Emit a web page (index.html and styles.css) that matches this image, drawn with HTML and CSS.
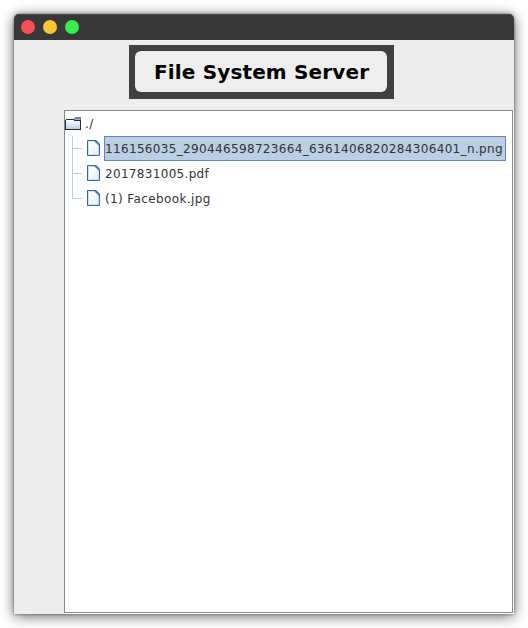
FILE: index.html
```
<!DOCTYPE html>
<html lang="en">
<head>
<meta charset="utf-8">
<title>File System Server</title>
<link rel="stylesheet" href="styles.css">
</head>
<body>
<svg class="defs" width="0" height="0" aria-hidden="true">
  <defs>
    <linearGradient id="paper" x1="0" y1="0" x2="1" y2="1"><stop offset=".3" stop-color="#fff"/><stop offset="1" stop-color="#dce8f3"/></linearGradient>
    <linearGradient id="folder" x1="0" y1="0" x2="0" y2="1"><stop offset="0" stop-color="#fff"/><stop offset="1" stop-color="#b8cfe5"/></linearGradient>
    <symbol id="file" viewBox="0 0 13 16">
      <path d="M.5 .5H8L12.500 5V15.500H.5Z" fill="url(#paper)" stroke="#2f68a3"/>
      <path d="M1.500 14.500V1.500H7M1.500 14.500H11.500V6" fill="none" stroke="#cfdfee"/>
      <path d="M7 0H9L13 4V6H12L7 1Z" fill="#2f68a3"/>
      <path d="M8 1.500L11.500 5" stroke="#dce8f3" stroke-dasharray="1 1"/>
    </symbol>
  </defs>
</svg>
<main class="window">
  <header class="titlebar"><i class="dot close"></i><i class="dot minimize"></i><i class="dot zoom"></i></header>
  <div class="content">
    <h1 class="banner"><span>File System Server</span></h1>
    <ul class="tree">
      <li class="root">
        <svg class="folder" width="16" height="13" viewBox="0 0 16 13" shape-rendering="crispEdges"><path d="M1 3H15V12H1Z" fill="url(#folder)"/><path d="M0 3H1V2H9V3H16V13H0Z M1 3V12H15V4H9V3Z" fill="#2b2b2b" fill-rule="evenodd"/><path d="M10 0H16V3H9V1H10Z" fill="#6382bf"/><path d="M10 2H15V3H10Z" fill="#9eb4dc"/></svg>
        <span class="name folder-name">./</span>
      </li>
      <li class="node"><svg class="file" width="13" height="16"><use href="#file"/></svg><span class="name selected">116156035_290446598723664_6361406820284306401_n.png</span></li>
      <li class="node"><svg class="file" width="13" height="16"><use href="#file"/></svg><span class="name">2017831005.pdf</span></li>
      <li class="node"><svg class="file" width="13" height="16"><use href="#file"/></svg><span class="name jpg">(1) Facebook.jpg</span></li>
    </ul>
  </div>
</main>
</body>
</html>
```

FILE: styles.css
```
* { box-sizing: border-box; }
body { margin: 0; padding: 14px; background: #fff; font-family: "DejaVu Sans", sans-serif; }
.defs { display: block; }
.window {
  width: 500px; height: 600px; overflow: hidden;
  display: flex; flex-direction: column;
  background: #ededed; border-radius: 5px 5px 0 0;
  box-shadow: 0 2px 14px rgba(0,0,0,.6), 0 0 3px rgba(0,0,0,.5);
}
.titlebar { height: 26px; flex: none; display: flex; align-items: center; gap: 8px; padding: 0 0 1px 7px; background: #383838; border-top: 1px solid #4b4b4b; }
.dot { width: 14px; height: 14px; border-radius: 50%; }
.close { background: #f64f57; }
.minimize { background: #fcc537; }
.zoom { background: #38ec4a; }
.content { flex: 1; display: flex; flex-direction: column; padding-top: 5px; }
.banner { width: 265px; height: 54px; margin: 0 0 11px 115px; padding: 6px 7px 7px 6px; background: #404040; flex: none; }
.banner span { display: block; height: 41px; padding-left: 19px; border-radius: 6px; background: #eee; color: #000; font-size: 20px; line-height: 43px; letter-spacing: .15px; white-space: nowrap; }
.tree { flex: 1; margin: 0 1px 1px 50px; padding: 0; list-style: none; background: #fff; border: 1px solid #7a8a99; box-shadow: 1px 1px #fff; }
.root, .node { height: 25px; display: flex; align-items: center; }
.node { padding-left: 7px; background: linear-gradient(#b8cfe5, #b8cfe5) 7px 0 / 1px 100% no-repeat, linear-gradient(#b8cfe5, #b8cfe5) 8px 12px / 9px 1px no-repeat; }
.node:last-child { background-size: 1px 13px, 9px 1px; }
.file { flex: none; margin: 0 4px 1px 15px; }
.name { height: 25px; padding: 0; border: 1px solid transparent; color: #333; font-size: 12px; line-height: 24px; letter-spacing: .32px; white-space: nowrap; }
.folder { flex: none; }
.folder-name { margin-left: 3px; }
.selected { width: 402px; letter-spacing: .34px; background: #b8cfe5; border-color: #6382bf; }
.jpg { letter-spacing: .38px; }
```
